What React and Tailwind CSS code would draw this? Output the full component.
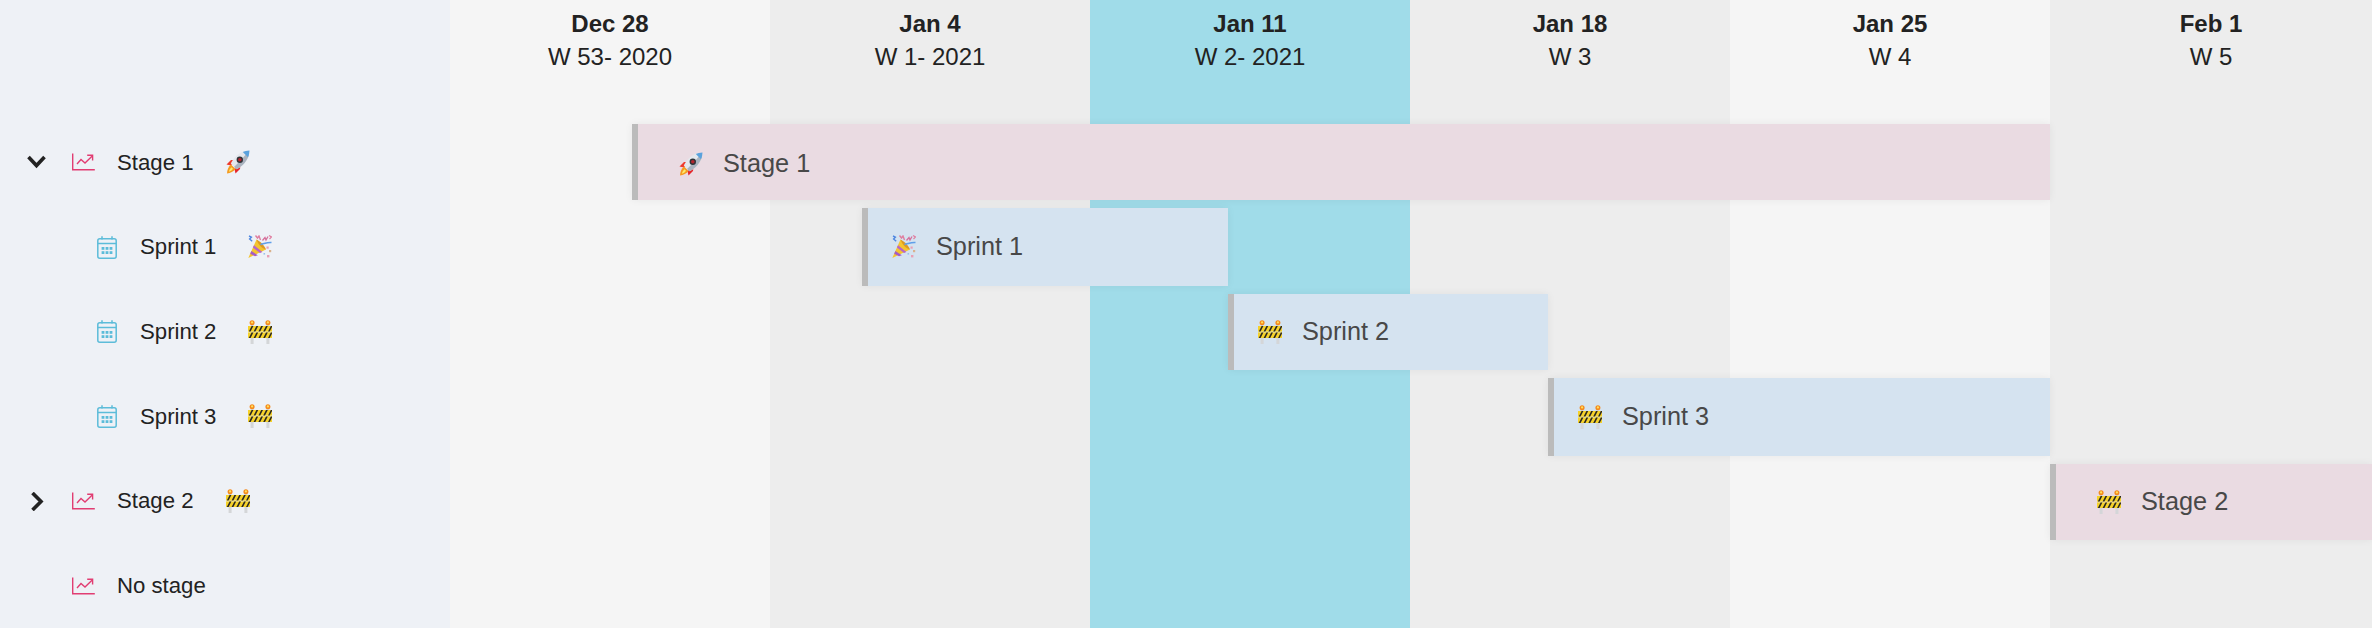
import React from "react";

const Rocket = ({ className }) => (
  <svg viewBox="0 0 24 24" className={className} aria-hidden="true">
    <path d="M0.5 14.5 L5 10 L9.5 10 L5 15.5 Z" fill="#ee3a2c" />
    <path d="M9.5 23.5 L14 19 L14.5 14 L8.5 19 Z" fill="#e5262b" />
    <path d="M1 23.5 C1 20 2.5 16.5 5 14.5 L9.5 19 C7.5 21.5 4.5 23 1 23.5 Z" fill="#f59a1f" />
    <path d="M2.8 21.8 C3.2 20 4.2 18.3 5.5 17.2 L7 18.7 C6 20.2 4.6 21.3 2.8 21.8 Z" fill="#fde96a" />
    <path d="M4.8 13.5 C8 7 13 2.8 19 1 L23 5 C21 11 17 16 10.5 19.2 Z" fill="#e4e8ed" />
    <path d="M8 17 C12.5 12.5 16.5 8.5 21 3 L23 5 C21 11 17 16 10.5 19.2 Z" fill="#a9b3bf" />
    <path d="M16.8 2 C18.5 1.2 20.8 0.6 23.5 0.5 C23.4 3 22.9 5.2 22 7.2 Z" fill="#5aa2dd" />
    <circle cx="13.8" cy="9.8" r="3.2" fill="#2f3338" />
    <circle cx="13.8" cy="9.8" r="1.8" fill="#b3262e" />
  </svg>
);

const Popper = ({ className }) => (
  <svg viewBox="0 0 24 24" className={className} aria-hidden="true">
    <path d="M0.3 23 L8.5 4.5 L18 14.5 Z" fill="#f4c430" />
    <path d="M3.4 16 L9.8 20.2 L7 21.2 L2.2 18.7 Z" fill="#a45cc6" />
    <path d="M6 10.2 L14.4 17 L12 18 L4.9 12.6 Z" fill="#b566c9" />
    <path d="M8.5 4.5 C12 6 16.5 10.5 18 14.5 C14 13.5 10 9.5 8.5 4.5 Z" fill="#dd9a22" />
    <path d="M1 1 L3.4 2.2 L1.6 4 L4.2 6.2" fill="none" stroke="#4f87e0" strokeWidth="1.4" />
    <path d="M7.5 0.5 L9.5 3 L11 1 L12.5 5" fill="none" stroke="#e07ea0" strokeWidth="1.4" />
    <path d="M12.5 9.5 C16 9 19 7 23.5 7.5" fill="none" stroke="#5f9fea" strokeWidth="1.6" />
    <path d="M14.5 5.5 L17 2.5 L18 5 L20 1.5" fill="none" stroke="#d5709b" strokeWidth="1.3" />
    <path d="M21 0.5 L23.5 2 L21.5 4" fill="none" stroke="#e07ea0" strokeWidth="1.2" />
    <rect x="18.5" y="11.5" width="2.2" height="2.2" fill="#e8a0b5" />
    <rect x="21" y="15" width="2.2" height="2.2" fill="#d9b28d" />
    <rect x="19" y="20" width="2.4" height="2.4" fill="#e8a0b5" />
    <rect x="15.5" y="18" width="1.6" height="1.6" fill="#9cc0ea" />
  </svg>
);

const Barrier = ({ className }) => (
  <svg viewBox="0 0 24 24" className={className} aria-hidden="true">
    <rect x="2.6" y="5" width="3" height="19" fill="#d4d6d8" />
    <rect x="18.4" y="5" width="3" height="19" fill="#d4d6d8" />
    <circle cx="4.1" cy="2.8" r="2.5" fill="#f5891d" />
    <circle cx="19.9" cy="2.8" r="2.5" fill="#f5891d" />
    <circle cx="4.1" cy="2.4" r="1.1" fill="#fde25e" />
    <circle cx="19.9" cy="2.4" r="1.1" fill="#fde25e" />
    <rect x="0" y="6" width="24" height="5.6" fill="#f6d22a" />
    <rect x="0" y="12.4" width="24" height="5.6" fill="#f6d22a" />
    <path d="M0.8 11.6 L3.6 6 H5.4 L2.6 11.6 Z M5.6 11.6 L8.4 6 H10.2 L7.4 11.6 Z M10.4 11.6 L13.2 6 H15 L12.2 11.6 Z M15.2 11.6 L18 6 H19.8 L17 11.6 Z M20 11.6 L22.8 6 H24 V7 L21.7 11.6 Z" fill="#2a2822" />
    <path d="M0.8 18 L3.6 12.4 H5.4 L2.6 18 Z M5.6 18 L8.4 12.4 H10.2 L7.4 18 Z M10.4 18 L13.2 12.4 H15 L12.2 18 Z M15.2 18 L18 12.4 H19.8 L17 18 Z M20 18 L22.8 12.4 H24 V13.4 L21.7 18 Z" fill="#2a2822" />
  </svg>
);

const Emoji = ({ kind, className }) => {
  if (kind === "rocket") return <Rocket className={className} />;
  if (kind === "party") return <Popper className={className} />;
  return <Barrier className={className} />;
};

const ChartIcon = () => (
  <svg viewBox="0 0 23 18" className="w-[23px] h-[18px] shrink-0 text-[#e13d72]" fill="none" stroke="currentColor" strokeWidth="1.4" aria-hidden="true">
    <path d="M0.7 0.5 V16.8 H22.8" />
    <path d="M5 11 L9 6.5 L13 10 L20 3.2" />
    <path d="M15.2 2.3 H20.6 V7.6" />
  </svg>
);

const CalendarIcon = () => (
  <svg viewBox="0 0 20 23" className="w-[20px] h-[23px] shrink-0 text-[#5cbcd9]" fill="none" stroke="currentColor" strokeWidth="1.5" aria-hidden="true">
    <rect x="0.8" y="2.7" width="18.4" height="19.5" rx="2" />
    <path d="M0.8 7.5 H19.2" />
    <path d="M5 0.2 V3.5 M15 0.2 V3.5" />
    <g fill="currentColor" stroke="none">
      <rect x="4.6" y="11" width="2.8" height="2.8" />
      <rect x="8.6" y="11" width="2.8" height="2.8" />
      <rect x="12.6" y="11" width="2.8" height="2.8" />
      <rect x="4.6" y="15.2" width="2.8" height="2.8" />
      <rect x="8.6" y="15.2" width="2.8" height="2.8" />
      <rect x="12.6" y="15.2" width="2.8" height="2.8" />
    </g>
  </svg>
);

const Chevron = ({ open }) => (
  <svg viewBox="0 0 19 19" className="w-[19px] h-[19px] shrink-0 text-[#222222]" fill="none" stroke="currentColor" strokeWidth="3.6" aria-hidden="true">
    {open ? <path d="M1.5 4 L9.5 12.5 L17.5 4" /> : <path d="M5.5 1 L14 9.5 L5.5 18" />}
  </svg>
);

const columns = [
  { title: "Dec 28", sub: "W 53- 2020", bg: "bg-[#f5f5f5]", w: "w-[320px]" },
  { title: "Jan 4", sub: "W 1- 2021", bg: "bg-[#ededed]", w: "w-[320px]" },
  { title: "Jan 11", sub: "W 2- 2021", bg: "bg-[#a0dce9]", w: "w-[320px]" },
  { title: "Jan 18", sub: "W 3", bg: "bg-[#ededed]", w: "w-[320px]" },
  { title: "Jan 25", sub: "W 4", bg: "bg-[#f5f5f5]", w: "w-[320px]" },
  { title: "Feb 1", sub: "W 5", bg: "bg-[#ededed]", w: "w-[322px]" },
];

const bars = [
  { label: "Stage 1", emoji: "rocket", box: "ml-[182px] w-[1418px] h-[76px] pl-[41px] pt-[3px] bg-[#eadbe2]" },
  { label: "Sprint 1", emoji: "party", box: "ml-[412px] w-[366px] h-[78px] pl-[24px] bg-[#d5e3f0]" },
  { label: "Sprint 2", emoji: "barrier", box: "ml-[778px] w-[320px] h-[76px] pl-[24px] bg-[#d5e3f0]" },
  { label: "Sprint 3", emoji: "barrier", box: "ml-[1098px] w-[502px] h-[78px] pl-[24px] bg-[#d5e3f0]" },
  { label: "Stage 2", emoji: "barrier", box: "ml-[1600px] w-[322px] h-[76px] pl-[41px] bg-[#eadbe2]" },
];

const Stage = ({ label, emoji, chevron }) => (
  <div className="h-[84.7px] flex items-center pl-[27px]">
    <div className="w-[19px] h-[19px] shrink-0 mr-[26px]">
      {chevron && <Chevron open={chevron === "down"} />}
    </div>
    <ChartIcon />
    <span className="ml-[22px] mr-[32px]">{label}</span>
    {emoji && <Emoji kind={emoji} className="w-[24px] h-[24px] shrink-0" />}
  </div>
);

const Sprint = ({ label, emoji }) => (
  <div className="h-[84.7px] flex items-center pl-[97px]">
    <CalendarIcon />
    <span className="ml-[23px] mr-[32px]">{label}</span>
    <Emoji kind={emoji} className="w-[24px] h-[24px] shrink-0" />
  </div>
);

export default function App() {
  return (
    <div className="flex w-[2372px] h-[628px] overflow-hidden font-['Liberation_Sans',Arial,sans-serif] text-[#222222]">
      <aside className="w-[450px] shrink-0 pt-[120px] bg-[#eef1f6] text-[22.2px]">
        <Stage label="Stage 1" emoji="rocket" chevron="down" />
        <Sprint label="Sprint 1" emoji="party" />
        <Sprint label="Sprint 2" emoji="barrier" />
        <Sprint label="Sprint 3" emoji="barrier" />
        <Stage label="Stage 2" emoji="barrier" chevron="right" />
        <Stage label="No stage" />
      </aside>
      <main className="relative flex-1">
        <div className="flex h-full">
          {columns.map((c) => (
            <div key={c.title} className={`${c.w} ${c.bg} shrink-0 h-full pt-[8px] text-center text-[24px] leading-[32px]`}>
              <div className="font-bold">{c.title}</div>
              <div className="mt-px">{c.sub}</div>
            </div>
          ))}
        </div>
        <div className="absolute inset-0 pt-[124px] flex flex-col gap-2">
          {bars.map((b) => (
            <div key={b.label} className={`${b.box} flex items-center shrink-0 border-l-[6px] border-[#bbbbbb] shadow-[0_0_8px_rgba(0,0,0,0.06)] text-[25.3px] text-[#484848]`}>
              <Emoji kind={b.emoji} className="w-[24px] h-[24px] shrink-0" />
              <span className="ml-[20px]">{b.label}</span>
            </div>
          ))}
        </div>
      </main>
    </div>
  );
}
